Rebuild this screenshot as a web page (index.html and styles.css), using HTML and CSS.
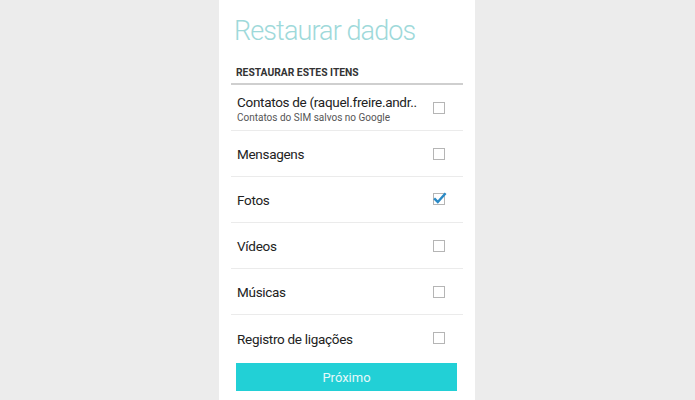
FILE: index.html
```html
<!DOCTYPE html>
<html lang="pt">
<head>
<meta charset="utf-8">
<link rel="stylesheet" href="styles.css">
</head>
<body>
<div class="panel">
  <h1 class="title">Restaurar dados</h1>
  <div class="section">RESTAURAR ESTES ITENS</div>
  <ul class="list">
    <li class="row">
      <div class="text">
        <div class="name">Contatos de (raquel.freire.andr..</div>
        <div class="sub">Contatos do SIM salvos no Google</div>
      </div>
      <span class="box"></span>
    </li>
    <li class="row"><div class="text"><div class="name">Mensagens</div></div><span class="box"></span></li>
    <li class="row"><div class="text"><div class="name">Fotos</div></div>
      <svg class="check" width="16" height="16" viewBox="0 0 16 16">
        <rect x="2.5" y="2.5" width="11" height="11" fill="none" stroke="#b5b5b5" stroke-width="1"/>
        <path d="M4 8.2 L6.8 11 L13.8 3.2" fill="none" stroke="#2a8ac6" stroke-width="2.4" stroke-linecap="square"/>
      </svg>
    </li>
    <li class="row"><div class="text"><div class="name">Vídeos</div></div><span class="box"></span></li>
    <li class="row"><div class="text"><div class="name">Músicas</div></div><span class="box"></span></li>
    <li class="row last"><div class="text"><div class="name">Registro de ligações</div></div><span class="box"></span></li>
  </ul>
  <button class="next">Próximo</button>
</div>
</body>
</html>
```
FILE: styles.css
```css
html, body {
  margin: 0;
  padding: 0;
  background: #ececec;
  height: 400px;
  overflow: hidden;
}
.panel {
  width: 256px;
  height: 400px;
  margin-left: 219px;
  background: #ffffff;
  padding: 15px 12px 0 12px;
  box-sizing: border-box;
  font-family: Roboto, "Noto Sans", sans-serif;
}
.title {
  margin: 0 0 0 3px;
  font-size: 27px;
  font-weight: 300;
  line-height: 32px;
  color: #9ed9da;
  letter-spacing: -0.9px;
}
.section {
  margin-top: 19px;
  padding: 0 0 3px 5px;
  font-size: 10.3px;
  font-weight: 700;
  line-height: 14px;
  color: #333333;
  border-bottom: 2px solid #cfcfcf;
}
.list {
  list-style: none;
  margin: 0;
  padding: 0;
}
.row {
  height: 45px;
  display: flex;
  align-items: center;
  justify-content: space-between;
  border-bottom: 1px solid #ebebeb;
  padding-left: 6px;
  padding-right: 18px;
}
.row.last {
  border-bottom: none;
  height: 46px;
}
.text {
  padding-top: 2px;
}
.name {
  font-size: 13.5px;
  line-height: 17px;
  letter-spacing: -0.3px;
  color: #222222;
  white-space: nowrap;
}
.sub {
  font-size: 10px;
  line-height: 13px;
  color: #555555;
  white-space: nowrap;
}
.box {
  width: 12px;
  height: 12px;
  box-sizing: border-box;
  border: 1px solid #b5b5b5;
}
.check {
  margin-right: -2px;
  margin-top: -2px;
}
.next {
  display: block;
  margin: 2px 6px 0 5px;
  width: 221px;
  height: 28px;
  border: none;
  background: #22d0d6;
  color: #e6f9fa;
  font-family: Roboto, "Noto Sans", sans-serif;
  font-size: 13px;
  padding: 0;
}
```
